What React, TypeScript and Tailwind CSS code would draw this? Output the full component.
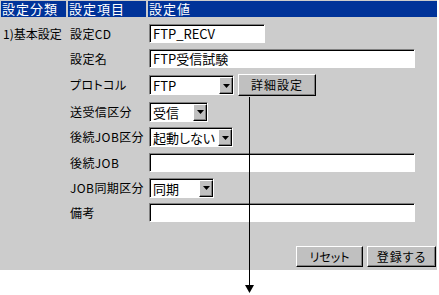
import React from "react";

const inset =
  "bg-white border border-t-[#808080] border-l-[#808080] border-r-white border-b-white shadow-[inset_1px_1px_0_#000]";
const raised =
  "bg-[#c0c0c0] border border-t-white border-l-white border-r-black border-b-black shadow-[inset_-1px_-1px_0_#808080]";

function TextBox({ w, value }: { w: string; value?: string }) {
  return (
    <div className={`${inset} ${w} h-[19px] pl-[3px] pt-px text-[13px] leading-[16px] whitespace-nowrap overflow-hidden`}>
      {value}
    </div>
  );
}

function Select({ w, value }: { w: string; value: string }) {
  return (
    <div className={`${inset} ${w} h-[20px] flex items-stretch pl-px pt-px`}>
      <div className="flex-1 pl-[2px] text-[13px] leading-[17px] whitespace-nowrap overflow-hidden">{value}</div>
      <div className={`${raised} w-[14px] flex items-center justify-center`}>
        <svg width="7" height="4" viewBox="0 0 7 4">
          <polygon points="0,0 7,0 3.5,4" fill="#000" />
        </svg>
      </div>
    </div>
  );
}

function Row({ h, a, b, children }: { h: string; a?: string; b: string; children: React.ReactNode }) {
  return (
    <div className={`grid grid-cols-[65px_78px_289px] gap-x-[2px] items-center ${h}`}>
      <div className="pl-[2px] whitespace-nowrap">{a}</div>
      <div className="pl-[2px] whitespace-nowrap tracking-[0.4px]">{b}</div>
      <div className="pl-px flex items-center gap-[4px]">{children}</div>
    </div>
  );
}

export default function App() {
  return (
    <div className="relative w-[439px] h-[295px] bg-white text-black text-[12px] leading-[16px] [font-feature-settings:'palt'] font-['Noto_Sans_CJK_JP','Liberation_Sans',sans-serif]">
      <div className="w-[437px] h-[270px] bg-[#cccccc] pt-px pl-px">
        {/* header */}
        <div className="grid grid-cols-[65px_78px_289px] gap-x-[2px] h-[16px] text-white text-[13px] leading-[16px] tracking-[1px]">
          <div className="bg-[#003399] pl-[1px]">設定分類</div>
          <div className="bg-[#003399] pl-[1px]">設定項目</div>
          <div className="bg-[#003399] pl-[1px]">設定値</div>
        </div>

        <div className="mt-[4px]">
          <Row h="h-[25px]" a="1)基本設定" b="設定CD">
            <TextBox w="w-[116px]" value="FTP_RECV" />
          </Row>
          <Row h="h-[25px]" b="設定名">
            <TextBox w="w-[266px]" value="FTP受信試験" />
          </Row>
          <Row h="h-[28px]" b="プロトコル">
            <Select w="w-[85px]" value="FTP" />
            <button className={`${raised} w-[78px] h-[22px] text-[12px] leading-[18px] tracking-[1px]`}>詳細設定</button>
          </Row>
          <Row h="h-[25px]" b="送受信区分">
            <Select w="w-[59px]" value="受信" />
          </Row>
          <Row h="h-[26px]" b="後続JOB区分">
            <Select w="w-[84px]" value="起動しない" />
          </Row>
          <Row h="h-[25px]" b="後続JOB">
            <TextBox w="w-[266px]" />
          </Row>
          <Row h="h-[25px]" b="JOB同期区分">
            <Select w="w-[65px]" value="同期" />
          </Row>
          <Row h="h-[25px]" b="備考">
            <TextBox w="w-[266px]" />
          </Row>
        </div>

        <div className="flex justify-end gap-[4px] pr-[1px] mt-[21px]">
          <button className={`${raised} w-[67px] h-[21px] text-[12px] leading-[17px]`}>リセット</button>
          <button className={`${raised} w-[69px] h-[21px] text-[12px] leading-[17px] tracking-[1px]`}>登録する</button>
        </div>
      </div>

      {/* arrow from 詳細設定 */}
      <svg className="absolute left-0 top-0 pointer-events-none" width="439" height="295">
        <line x1="249.5" y1="97" x2="249.5" y2="287" stroke="#000" strokeWidth="1" />
        <polygon points="245,285 254,285 249.5,293" fill="#000" />
      </svg>
    </div>
  );
}
